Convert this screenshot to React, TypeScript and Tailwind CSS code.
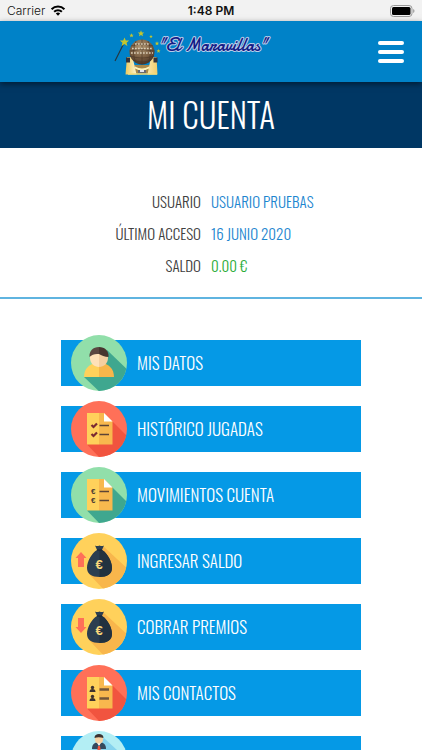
import { useId, type ReactNode } from 'react'

const PAPER_LINES = [24, 33]

const StatusBar = () => (
  <div className="flex h-[21px] items-center justify-between bg-[#f2f2f2] px-[7px] font-['Inter','Roboto',sans-serif] text-[12px] text-[#111]">
    <span className="flex flex-1 items-center gap-[5px]">
      Carrier
      <svg viewBox="0 0 16 12" className="h-[11px] w-4" aria-hidden="true">
        <g fill="none" stroke="#000" strokeWidth="2.2">
          <path d="M1 4.6a9.8 9.8 0 0 1 14 0" />
          <path d="M3.8 7.4a5.9 5.9 0 0 1 8.4 0" />
        </g>
        <path d="M8 11.8 5.6 9.3a3.4 3.4 0 0 1 4.8 0z" />
      </svg>
    </span>
    <span className="font-semibold">1:48 PM</span>
    <span className="flex flex-1 justify-end">
      <svg viewBox="0 0 25 12" className="h-3 w-[25px]" aria-hidden="true">
        <rect x=".5" y=".5" width="21.5" height="11" rx="3" fill="#f2f2f2" stroke="#999" />
        <rect x="2" y="2" width="18.5" height="8" rx="1.5" />
        <path d="M23.2 4v4a2.2 2.2 0 0 0 0-4z" fill="#999" />
      </svg>
    </span>
  </div>
)

const Star = ({ x, y, r }: { x: number; y: number; r: number }) => (
  <path
    transform={`translate(${x} ${y}) scale(${r})`}
    d="M0-1 .28-.33 1-.3.45.16.62.85 0 .45-.62.85-.45.16-1-.3-.28-.33z"
    fill="#c3c62e"
  />
)

const Logo = () => (
  <a href="#inicio" className="flex items-start">
    <svg viewBox="0 0 48 48" className="h-12 w-12 shrink-0" aria-hidden="true">
      <defs>
        <radialGradient id="globe" cx=".45" cy=".3" r=".75">
          <stop offset="0" stopColor="#b39a76" />
          <stop offset=".6" stopColor="#765a3e" />
          <stop offset="1" stopColor="#3d2c22" />
        </radialGradient>
        <linearGradient id="stand">
          <stop offset="0" stopColor="#edc95c" />
          <stop offset=".4" stopColor="#fffbe0" />
          <stop offset="1" stopColor="#f0cd6a" />
        </linearGradient>
      </defs>
      <path d="m1 33 9-18" stroke="#26333c" strokeWidth="1.1" />
      <Star x={10.5} y={14} r={4.6} />
      <Star x={17.5} y={7.5} r={2.2} />
      <Star x={27} y={5.5} r={3.2} />
      <Star x={37} y={8.5} r={1.8} />
      <Star x={43} y={15.5} r={2.2} />
      <Star x={44.5} y={23} r={2} />
      <path d="M16 37h24v8.5H16z" fill="#a8894a" />
      <path d="M13 29h5.5l4 17.5h-11zM37 29h5.5l1 17.5h-10z" fill="url(#stand)" />
      <path d="M12 29.500h4v5h-4zM39.500 29.500h4v5h-4z" fill="#33333b" />
      <circle cx="28" cy="24" r="12.5" fill="url(#globe)" />
      <g fill="none" stroke="#4a3525" strokeWidth=".6">
        <path d="M17 18q11-4 22 0M15.6 23q12-3 25 0M16 28q12 4 24 0M19 32q9 4 18 0" />
        <path d="M28 11.500v25M22 13q-5 11 0 22M34 13q5 11 0 22" />
      </g>
      <g stroke="#d9cdb6" strokeWidth="1.4" strokeDasharray="1.7 1.3">
        <path d="M18 20.500h20M17 25h22M21 16h14" />
      </g>
      <path d="M21 38.500q7 4 14 0v2q-7 4-14 0z" fill="#fff3b8" />
      <path d="M24 42h8v3h-8z" fill="#6a6a70" />
      <path d="M26 42h4v2h-4z" fill="#e6e6ee" />
      <path d="M14 46h29" stroke="#f3dc7a" strokeWidth="1.5" />
    </svg>
    <span className="-ml-1 mt-[6px] whitespace-nowrap font-['Damion','Kaushan_Script','Liberation_Serif',serif] text-[18px] leading-6 text-[#141c86] [paint-order:stroke_fill] [-webkit-text-stroke:2px_#b9cdea]">
      "El Maravillas"
    </span>
  </a>
)

/** Round 56px badge; everything drawn inside is clipped to the disc. */
const Badge = ({ color, children }: { color: string; children: ReactNode }) => {
  const id = useId()
  return (
    <svg viewBox="0 0 56 56" className="size-14 shrink-0" aria-hidden="true">
      <clipPath id={id}>
        <circle cx="28" cy="28" r="28" />
      </clipPath>
      <g clipPath={`url(#${id})`}>
        <rect width="56" height="56" fill={color} />
        {children}
      </g>
    </svg>
  )
}

const UserIcon = () => (
  <Badge color="#91dfaa">
    <path d="m36 15 24 23v22H32L13 42z" fill="#3fa78f" />
    <path d="M13 42c0-8 5-13 12-14h3v14z" fill="#ffd15b" />
    <path d="M43 42c0-8-5-13-12-14h-3v14z" fill="#f7b64b" />
    <path d="M19 19h9v13c-5 0-9-4-9-9z" fill="#ffe1b8" />
    <path d="M37 19h-9v13c5 0 9-4 9-9z" fill="#f4cfa1" />
    <path d="M18.5 22c-.5-6 3.5-10 9.5-10v7c-4-.5-7 .5-9.5 3z" fill="#5b4740" />
    <path d="M37.5 22c.5-6-3.5-10-9.5-10v7c2 1 6 3 9.5 3z" fill="#48362f" />
  </Badge>
)

const Paper = ({ color, shadow, children }: { color: string; shadow: string; children: ReactNode }) => (
  <Badge color={color}>
    <path d="m41 20 19 19v21H32L16 43.5z" fill={shadow} />
    <path d="M16 12h12v31.5H16z" fill="#ffd15b" />
    <path d="M28 12h5l8.5 8.5v23H28z" fill="#f8b84e" />
    <path d="M33 12v8.5h8.5z" fill="#fff" />
    {children}
  </Badge>
)

const HistoryIcon = () => (
  <Paper color="#ff7058" shadow="#f1543f">
    {PAPER_LINES.map((y) => (
      <g key={y} fill="none">
        <path d={`M20.5 ${y}l2 2 3.5-3.5`} stroke="#7b2a32" strokeWidth="2.2" />
        <path d={`M28.5 ${y + 0.5}h9.5`} stroke="#5c4436" strokeWidth="1.3" />
      </g>
    ))}
  </Paper>
)

const MovementsIcon = () => (
  <Paper color="#91dfaa" shadow="#3fa78f">
    {PAPER_LINES.map((y) => (
      <g key={y}>
        <text x="20" y={y + 3} fontSize="8" fontWeight="700" fill="#4d3b33" fontFamily="Liberation Sans, sans-serif">
          €
        </text>
        <path d={`M28.5 ${y + 0.5}h9.5`} stroke="#5c4436" strokeWidth="1.3" />
      </g>
    ))}
  </Paper>
)

const ContactsIcon = () => (
  <Paper color="#ff7058" shadow="#f1543f">
    {PAPER_LINES.map((y) => (
      <g key={y} fill="#40332f">
        <circle cx="21.5" cy={y - 1.5} r="1.7" />
        <path d={`M18.5 ${y + 3}q0-3 3-3t3 3z`} />
        <path d={`M28.5 ${y + 0.5}h9.5`} stroke="#5c4436" strokeWidth="2.4" strokeOpacity=".85" />
      </g>
    ))}
  </Paper>
)

const MoneyBagIcon = ({ arrow }: { arrow: 'up' | 'down' }) => (
  <Badge color="#ffd15b">
    <path d="m32 13 28 26v21H36L18 41z" fill="#f8b64c" />
    <path
      d={arrow === 'up' ? 'M10 19l5.5 6H13v9H7v-9H4.5z' : 'M10 34l5.5-6H13v-9H7v9H4.5z'}
      fill="#ff7058"
    />
    <path
      d="M24 12.5q2 1 4.5 0 2.5 1 4.5 0L31 17c5 3 10 11 10 18 0 6-5 9-12.500 9S16 41 16 35c0-7 5-15 10-18z"
      fill="#2c3e50"
    />
    <path d="M28.5 17H31c5 3 10 11 10 18 0 6-5 9-12.5 9z" fill="#22313f" />
    <path d="M26 17h5" stroke="#182430" />
    <text x="28" y="35.5" textAnchor="middle" fontSize="13" fontWeight="700" fill="#fbd77a" fontFamily="Liberation Sans, sans-serif">
      €
    </text>
  </Badge>
)

const GroupIcon = () => (
  <Badge color="#b3eef4">
    <path d="m33 7 27 25v28H34L21 17z" fill="#86d3ee" />
    <path d="M21 18c0-5 3-7 7-7s7 2 7 7z" fill="#34495e" />
    <path d="m25.5 11 2.5 4 2.5-4z" fill="#fff" />
    <path d="M24 5h8v3.5a4 4 0 0 1-8 0z" fill="#f6d2a5" />
    <path d="M23.500 7c0-3 2-4 4.500-4s4.500 1 4.500 4q-5-1.500-9 0z" fill="#3c3331" />
    <path d="M27 15h2l1 6h-4z" fill="#f1543f" />
  </Badge>
)

const account = [
  { label: 'USUARIO', value: 'USUARIO PRUEBAS', color: 'text-[#1d86cf]' },
  { label: 'ÚLTIMO ACCESO', value: '16 JUNIO 2020', color: 'text-[#1d86cf]' },
  { label: 'SALDO', value: '0.00 €', color: 'text-[#2aac37]' },
]

const menu = [
  { id: 'datos', label: 'MIS DATOS', icon: <UserIcon /> },
  { id: 'historico', label: 'HISTÓRICO JUGADAS', icon: <HistoryIcon /> },
  { id: 'movimientos', label: 'MOVIMIENTOS CUENTA', icon: <MovementsIcon /> },
  { id: 'ingresar', label: 'INGRESAR SALDO', icon: <MoneyBagIcon arrow="up" /> },
  { id: 'cobrar', label: 'COBRAR PREMIOS', icon: <MoneyBagIcon arrow="down" /> },
  { id: 'contactos', label: 'MIS CONTACTOS', icon: <ContactsIcon /> },
  { id: 'grupo', label: '', icon: <GroupIcon /> },
]

const App = () => (
  <div className="h-screen overflow-x-hidden overflow-y-auto bg-white font-['Oswald','Roboto_Condensed','Liberation_Sans_Narrow',sans-serif] font-light [scrollbar-width:none]">
    <StatusBar />

    <header className="relative grid h-[61px] grid-cols-[1fr_auto_1fr] items-center bg-[#0082c8] px-4 shadow-[0_2px_6px_rgba(0,0,0,0.5)]">
      <div className="col-start-2 mr-10">
        <Logo />
      </div>
      <button type="button" aria-label="Menú" className="flex flex-col gap-[5px] justify-self-end p-[2px]">
        <span className="h-1 w-[26px] rounded-xs bg-white" />
        <span className="h-1 w-[26px] rounded-xs bg-white" />
        <span className="h-1 w-[26px] rounded-xs bg-white" />
      </button>
    </header>

    <h1 className="flex h-[66px] items-center justify-center bg-[#003764] text-[33px] font-[350] text-white">
      MI CUENTA
    </h1>

    <main>
      <dl className="flex flex-col gap-2 border-b-2 border-[#5fb4e0] pt-[41px] pb-5">
        {account.map(({ label, value, color }) => (
          <div key={label} className="grid grid-cols-2 text-[15px] leading-6">
            <dt className="pr-[10px] text-right text-[#404040]">{label}</dt>
            <dd className={color}>{value}</dd>
          </div>
        ))}
      </dl>

      <nav className="mx-auto flex w-[300px] flex-col gap-5 py-[41px]">
        {menu.map(({ id, label, icon }) => (
          <a
            key={id}
            href={`#${id}`}
            className="flex h-[46px] items-center gap-[10px] bg-[#0599e6] pl-[10px] text-[17px] text-white"
          >
            {icon}
            {label}
          </a>
        ))}
      </nav>
    </main>
  </div>
)

export default App
